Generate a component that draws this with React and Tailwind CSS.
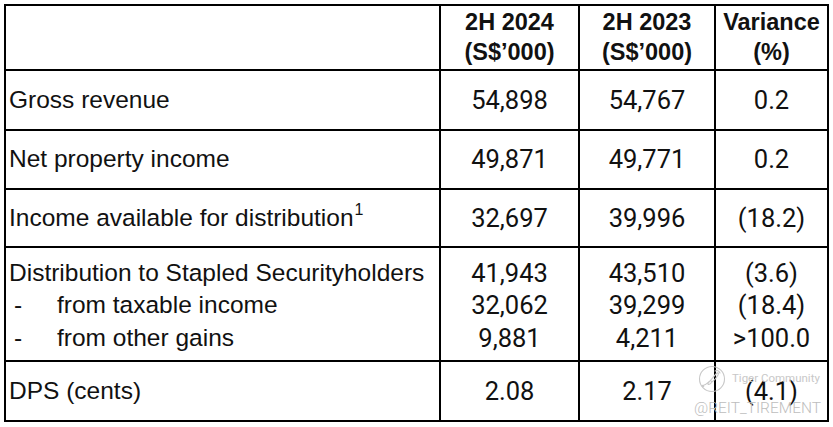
import React from "react";

const label = "font-['Liberation_Sans',Arial,sans-serif] text-[24.5px] text-[#111]";
const num = "font-['Roboto',sans-serif] text-[25.5px] text-[#111]";
const cell = "border-r-2 border-b-2 border-black flex items-center";

function NumCell({ children, lines }) {
  if (lines) {
    return (
      <div className={`${cell} flex-col justify-center leading-[32.5px] pt-[3px] ${num}`}>
        {lines.map((l, i) => (
          <div key={i}>{l}</div>
        ))}
      </div>
    );
  }
  return <div className={`${cell} justify-center ${num}`}>{children}</div>;
}

function HeadCell({ a, b }) {
  return (
    <div className="border-r-2 border-b-2 border-black flex flex-col items-center font-['Liberation_Sans',Arial,sans-serif] font-bold text-[23.5px] leading-[30px] text-[#111] pt-[1px]">
      <div>{a}</div>
      <div>{b}</div>
    </div>
  );
}

function Watermark() {
  return (
    <div className="absolute left-[693px] top-[364px] w-[138px] h-[60px] pointer-events-none">
      <svg className="absolute left-[5px] top-[1px]" width="28" height="28" viewBox="0 0 28 28" fill="none" stroke="#c8c8c8" strokeWidth="1.1" strokeLinecap="round">
        <circle cx="14" cy="14" r="12.5" />
        <path d="M6 20c2 0 4-3 6-4s2 2 0 3-3 0-1-2 5-6 7-8 3-1 2 1-3 5-6 7" />
        <path d="M17 6c2-1 4 0 5 2" />
        <circle cx="5" cy="21" r="0.8" />
      </svg>
      <div className="absolute left-[39px] top-[9px] font-['Roboto',sans-serif] text-[11.5px] leading-none text-[#c8c8c8]">
        Tiger Community
      </div>
      <div className="absolute left-[1px] top-[37px] font-['Roboto',sans-serif] font-light text-[15.5px] leading-none text-[#bdbdbd]">
        @REIT_TIREMENT
      </div>
    </div>
  );
}

export default function App() {
  return (
    <div className="relative w-[833px] h-[427px] bg-white overflow-hidden">
      <div className="pt-[4px] pl-[4px]">
        <div className="grid w-max grid-cols-[435px_139px_136px_113px] grid-rows-[65px_60px_59px_58px_114px_60px] border-l-2 border-t-2 border-black">
          <div className="border-r-2 border-b-2 border-black" />
          <HeadCell a="2H 2024" b="(S$’000)" />
          <HeadCell a="2H 2023" b="(S$’000)" />
          <HeadCell a="Variance" b="(%)" />

          <div className={`${cell} pl-[3px] ${label}`}>Gross revenue</div>
          <NumCell>54,898</NumCell>
          <NumCell>54,767</NumCell>
          <NumCell>0.2</NumCell>

          <div className={`${cell} pl-[3px] ${label}`}>Net property income</div>
          <NumCell>49,871</NumCell>
          <NumCell>49,771</NumCell>
          <NumCell>0.2</NumCell>

          <div className={`${cell} pl-[3px] ${label}`}>
            <span>Income available for distribution</span>
            <span className="text-[16px] relative top-[-8px] ml-[1px] leading-none">1</span>
          </div>
          <NumCell>32,697</NumCell>
          <NumCell>39,996</NumCell>
          <NumCell>(18.2)</NumCell>

          <div className={`${cell} flex-col items-start justify-center pl-[3px] pt-[3px] leading-[32.5px] ${label}`}>
            <div>Distribution to Stapled Securityholders</div>
            <div className="flex">
              <span className="w-[48px] pl-[5px]">-</span>
              <span>from taxable income</span>
            </div>
            <div className="flex">
              <span className="w-[48px] pl-[5px]">-</span>
              <span>from other gains</span>
            </div>
          </div>
          <NumCell lines={["41,943", "32,062", "9,881"]} />
          <NumCell lines={["43,510", "39,299", "4,211"]} />
          <NumCell lines={["(3.6)", "(18.4)", ">100.0"]} />

          <div className={`${cell} pl-[3px] ${label}`}>DPS (cents)</div>
          <NumCell>2.08</NumCell>
          <NumCell>2.17</NumCell>
          <NumCell>(4.1)</NumCell>
        </div>
      </div>
      <Watermark />
    </div>
  );
}
